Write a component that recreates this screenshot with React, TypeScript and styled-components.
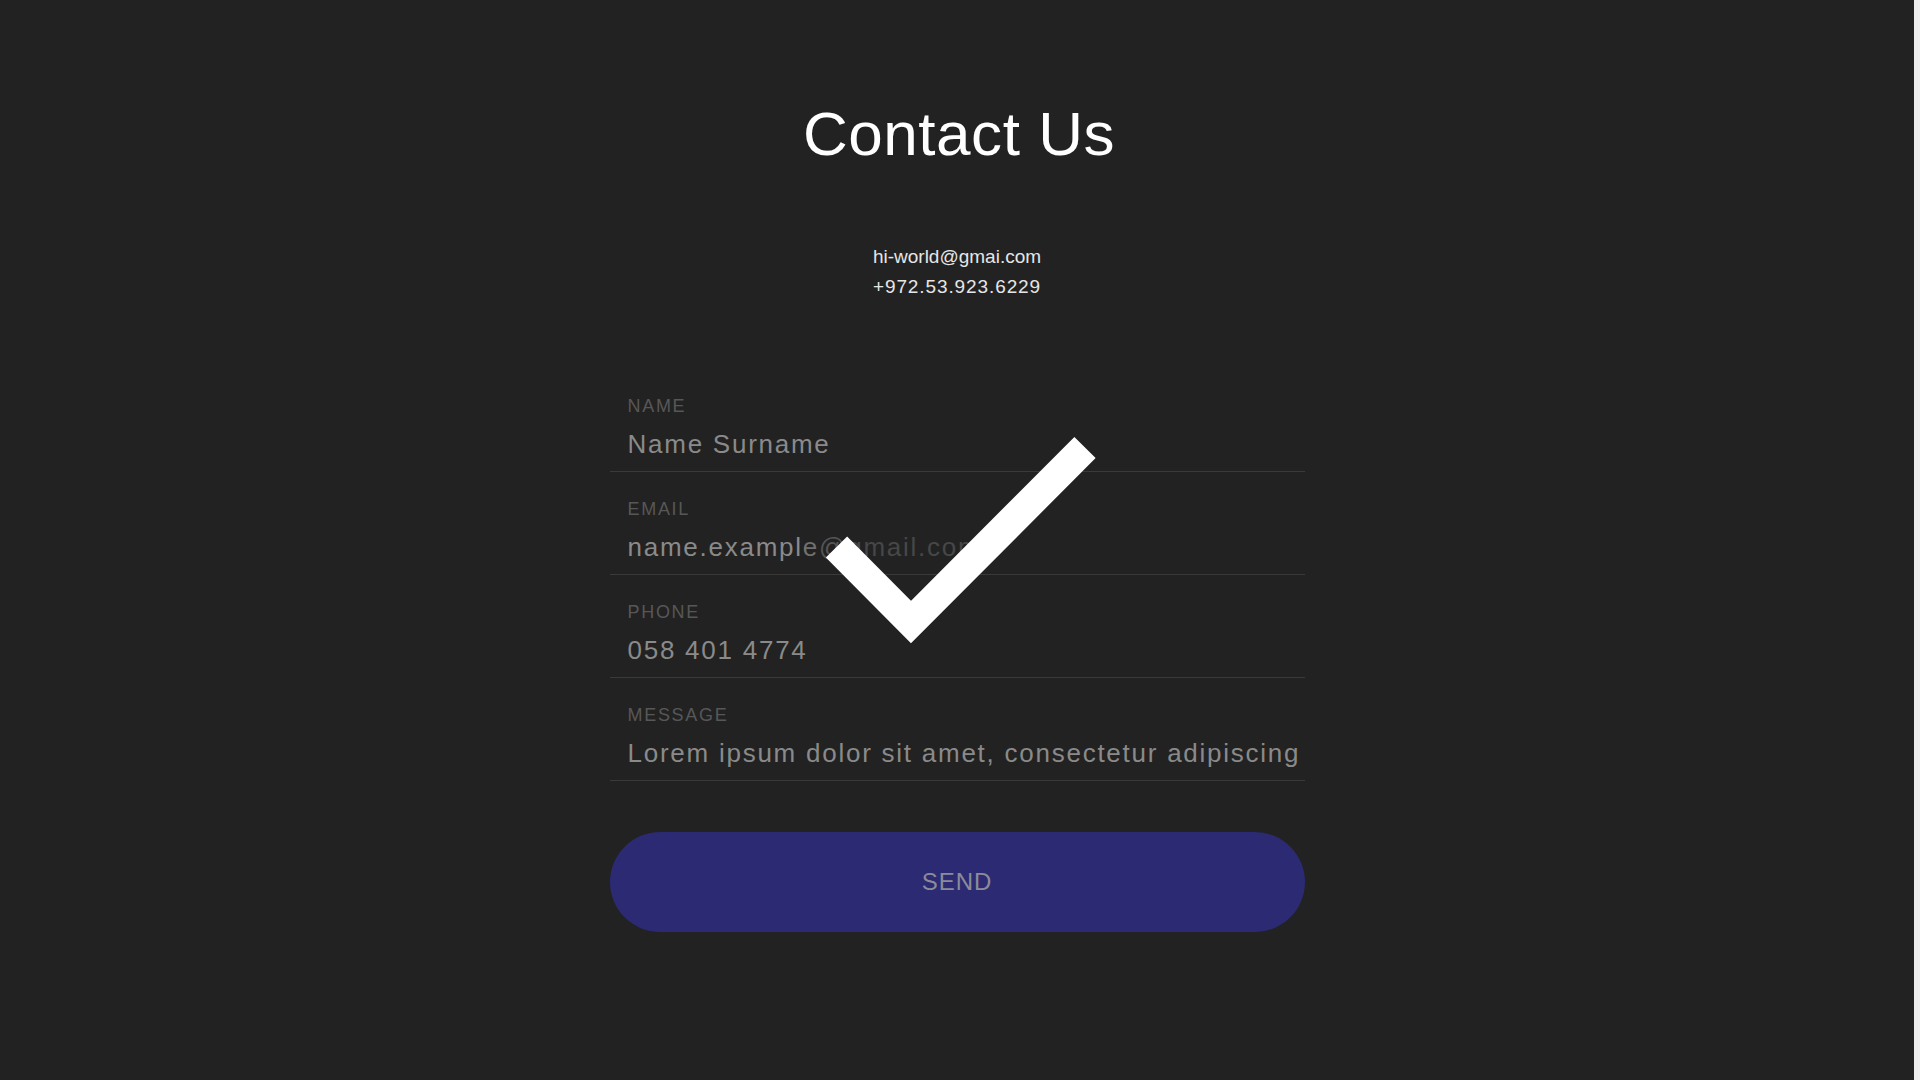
import React from "react";
import styled, { createGlobalStyle } from "styled-components";

const GlobalStyle = createGlobalStyle`
  html, body {
    margin: 0;
    padding: 0;
    background: #efefef;
  }
  body {
    font-family: "Liberation Sans", Helvetica, Arial, sans-serif;
    -webkit-font-smoothing: antialiased;
  }
  * { box-sizing: border-box; }
`;

const Page = styled.div`
  display: grid;
  grid-template-columns: 1fr 6px;
  height: 1080px;
  overflow: hidden;
`;

const Main = styled.main`
  background: #222222;
  display: flex;
  flex-direction: column;
  align-items: center;
  padding-top: 97px;
`;

const Edge = styled.div`
  background: #efefef;
`;

const Title = styled.h1`
  margin: 0 0 0 4px;
  font-size: 62px;
  line-height: 74px;
  font-weight: 400;
  color: #ffffff;
  letter-spacing: 0.55px;
`;

const Info = styled.div`
  margin-top: 71px;
  display: flex;
  flex-direction: column;
  align-items: center;
  font-size: 19px;
  line-height: 30px;
  color: #e6e6e6;
`;

const InfoLine = styled.span<{ $spacing: number }>`
  letter-spacing: ${(p) => p.$spacing}px;
`;

const Form = styled.form`
  position: relative;
  margin-top: 67px;
  width: 695px;
  display: flex;
  flex-direction: column;
`;

const Field = styled.div`
  display: flex;
  flex-direction: column;
  padding: 26px 2px 11px 18px;
  border-bottom: 1px solid #3a3a3a;
`;

const Label = styled.label`
  font-size: 18px;
  line-height: 22px;
  letter-spacing: 1.7px;
  color: #575757;
  text-transform: uppercase;
`;

const Value = styled.div`
  margin-top: 11px;
  font-size: 26px;
  line-height: 32px;
  letter-spacing: 1.75px;
  color: #8a8a8a;
  white-space: nowrap;
  overflow: hidden;
`;

const Tone = styled.span<{ $c: string }>`
  color: ${(p) => p.$c};
`;

const SendButton = styled.button`
  margin-top: 51px;
  height: 100px;
  width: 100%;
  border: none;
  border-radius: 50px;
  background: #2b2a72;
  color: #8b8b9a;
  font-family: "Liberation Sans", Helvetica, Arial, sans-serif;
  font-size: 24px;
  letter-spacing: 1px;
  cursor: pointer;
`;

const Check = styled.svg`
  position: absolute;
  left: 210px;
  top: 61px;
  width: 280px;
  height: 220px;
  pointer-events: none;
`;

const fields = [
  { label: "Name", value: "Name Surname" },
  { label: "Email", value: null },
  { label: "Phone", value: "058 401 4774" },
  { label: "Message", value: "Lorem ipsum dolor sit amet, consectetur adipiscing" },
];

export default function App() {
  return (
    <>
      <GlobalStyle />
      <Page>
        <Main>
          <Title>Contact Us</Title>
          <Info>
            <InfoLine $spacing={0}>hi-world@gmai.com</InfoLine>
            <InfoLine $spacing={0.9}>+972.53.923.6229</InfoLine>
          </Info>
          <Form onSubmit={(e) => e.preventDefault()}>
            {fields.map((f) => (
              <Field key={f.label}>
                <Label>{f.label}</Label>
                <Value>
                  {f.value ?? (
                    <>
                      <Tone $c="#8a8a8a">name.exampl</Tone>
                      <Tone $c="#707070">e</Tone>
                      <Tone $c="#555555">@</Tone>
                      <Tone $c="#474747">gmail.com</Tone>
                    </>
                  )}
                </Value>
              </Field>
            ))}
            <SendButton type="submit">SEND</SendButton>
            <Check viewBox="0 0 280 220">
              <polyline
                points="16.5,117 91,192 265,17.5"
                fill="none"
                stroke="#ffffff"
                strokeWidth="30"
                strokeLinecap="butt"
                strokeLinejoin="miter"
              />
            </Check>
          </Form>
        </Main>
        <Edge />
      </Page>
    </>
  );
}
